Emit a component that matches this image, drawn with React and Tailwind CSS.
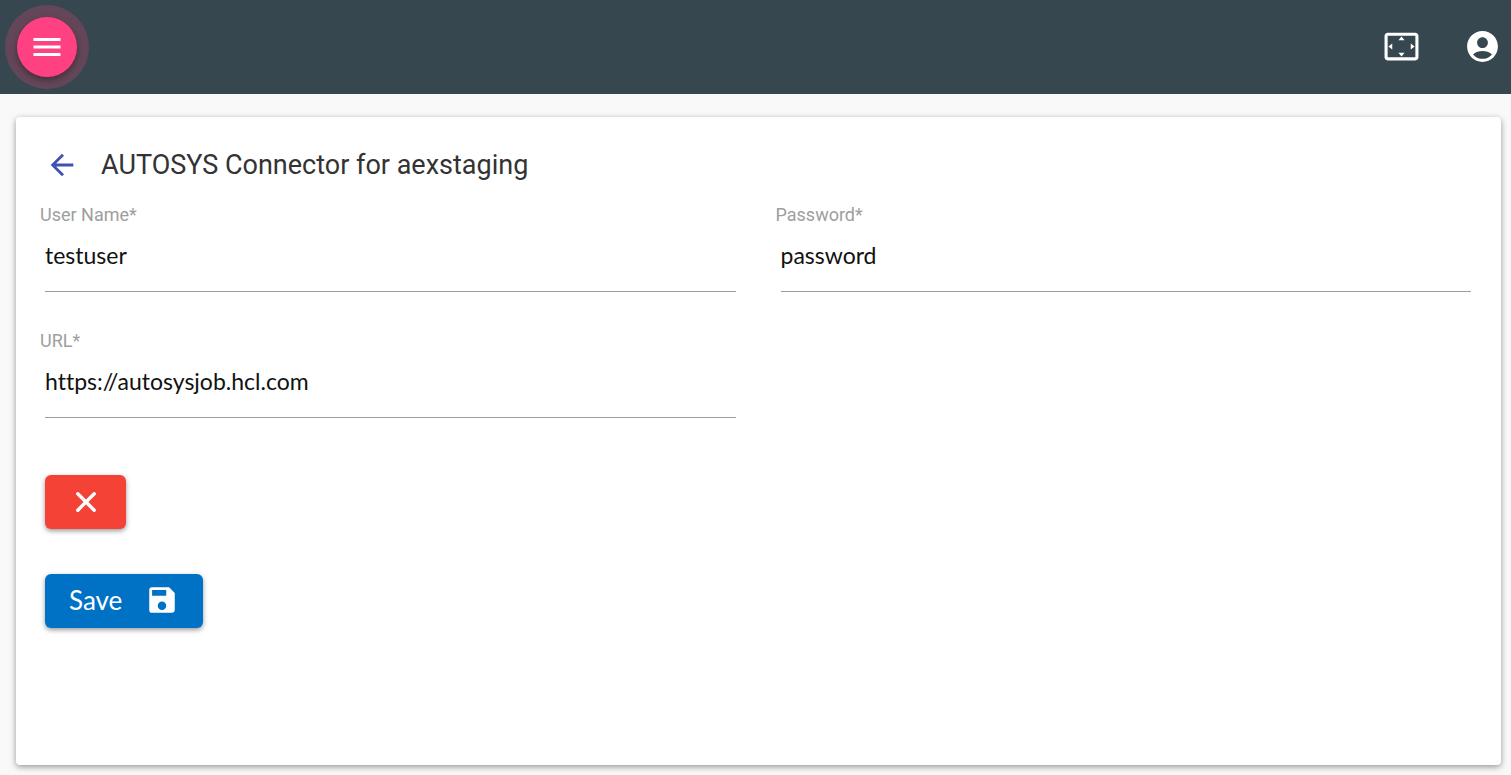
import { useState } from 'react';
import { MdAccountCircle, MdArrowBack, MdMenu, MdSave, MdSettingsOverscan } from 'react-icons/md';

const CloseIcon = () => (
  <svg viewBox="0 0 20 20" className="size-5" fill="none" stroke="currentColor" strokeWidth="3.4" strokeLinecap="round" aria-hidden="true">
    <path d="M1.8 1.8 18.2 18.2M18.2 1.8 1.8 18.2" />
  </svg>
);

const Header = () => (
  <header className="flex h-[94px] items-center justify-between bg-[#37474f] pl-[5px] pr-2.5">
    <div className="rounded-full bg-[#644659] p-3">
      <button
        aria-label="Menu"
        className="flex size-[60px] items-center justify-center rounded-full bg-[#ff4081] text-white shadow-[0_3px_6px_rgba(0,0,0,0.35)]"
      >
        <MdMenu size={36} />
      </button>
    </div>
    <div className="flex items-center gap-11 pb-0.5 text-white">
      <button aria-label="Full screen">
        <MdSettingsOverscan size={37} />
      </button>
      <button aria-label="Account">
        <MdAccountCircle size={37} />
      </button>
    </div>
  </header>
);

const Field = ({ id, label, value, onChange }) => (
  <div>
    <label htmlFor={id} className="block text-lg leading-6 text-[#9e9e9e]">
      {label}
    </label>
    <div className="pl-[5px]">
      <input
        id={id}
        type="text"
        value={value}
        onChange={(e) => onChange(id, e.target.value)}
        className="block h-[65px] w-full border-b border-[#9e9e9e] pb-2 font-['Lato','Open_Sans',sans-serif] text-[23px] text-[#111111] outline-none [font-variant-ligatures:none]"
      />
    </div>
  </div>
);

export default function App() {
  const [form, setForm] = useState({
    username: 'testuser',
    password: 'password',
    url: 'https://autosysjob.hcl.com',
  });

  const handleChange = (id, value) => setForm({ ...form, [id]: value });

  return (
    <div className="min-h-screen bg-[#f9f9f9] font-['Roboto',sans-serif]">
      <Header />
      <main className="pt-[23px] pr-2.5 pb-2.5 pl-4">
        <section className="rounded-sm bg-white pt-6 pr-[30px] pb-[137px] pl-6 shadow-[0_2px_6px_rgba(0,0,0,0.4)]">
          <div className="flex h-12 items-center gap-[22px] pl-[5px]">
            <button aria-label="Back" className="text-[#3f51b5]">
              <MdArrowBack size={34} />
            </button>
            <h1 className="text-[27px] leading-8 text-[#333333]">AUTOSYS Connector for aexstaging</h1>
          </div>

          <form onSubmit={(e) => e.preventDefault()} className="pt-3.5">
            <div className="grid grid-cols-2 gap-x-10 gap-y-[37px]">
              <Field id="username" label="User Name*" value={form.username} onChange={handleChange} />
              <Field id="password" label="Password*" value={form.password} onChange={handleChange} />
              <Field id="url" label="URL*" value={form.url} onChange={handleChange} />
            </div>

            <div className="flex flex-col items-start gap-[45px] pt-[57px] pl-[5px] text-white">
              <button
                type="button"
                aria-label="Cancel"
                className="flex h-[54px] w-[81px] items-center justify-center rounded-md bg-[#f44336] shadow-[0_2px_5px_rgba(0,0,0,0.4)]"
              >
                <CloseIcon />
              </button>
              <button
                type="submit"
                className="flex h-[54px] items-center gap-[23px] rounded-md bg-[#0072c6] pr-6 pb-0.5 pl-6 font-['Lato','Open_Sans',sans-serif] text-[26px] shadow-[0_2px_5px_rgba(0,0,0,0.4)]"
              >
                Save
                <MdSave size={34} />
              </button>
            </div>
          </form>
        </section>
      </main>
    </div>
  );
}
